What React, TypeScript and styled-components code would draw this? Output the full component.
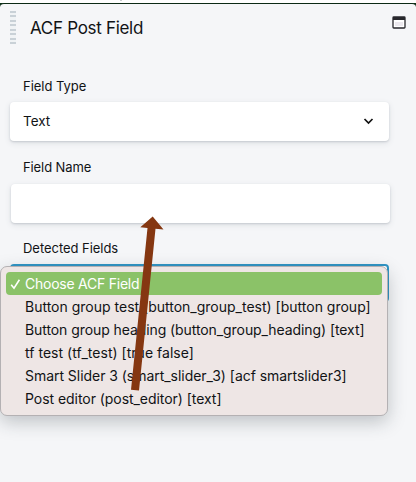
import React from "react";
import styled, { createGlobalStyle } from "styled-components";

const GlobalStyle = createGlobalStyle`
  * { box-sizing: border-box; }
  html, body { margin: 0; height: 100%; overflow: hidden; background: #fff; }
  body { font-family: Inter, "Liberation Sans", sans-serif; color: #111315; }
`;

const Page = styled.div`
  position: relative;
  width: 416px;
  height: 482px;
  padding-top: 3px;
  background: linear-gradient(#fff 3px, #0c3217 3px, #0c3217 8px, #f5f6f8 8px);
`;

const PageTick = styled.span`
  position: absolute;
  left: 120px;
  top: 0;
  width: 2px;
  height: 1px;
  background: #c9cccf;
`;

const Panel = styled.main`
  height: 479px;
  border-top: 1px solid #0c2a15;
  border-radius: 4px 4px 0 0;
  background: #f5f6f8;
`;

const Header = styled.header`
  display: flex;
  align-items: flex-start;
  height: 71px;
  padding: 7px 10px 0;
`;

const Grip = styled.div`
  width: 6px;
  height: 33px;
  background: repeating-linear-gradient(#c9d1d7 0 2px, #f0f3f5 2px 4.43px);
`;

const Title = styled.h1`
  flex: 1;
  margin: 5px 0 0 14px;
  font-size: 17px;
  line-height: 24px;
  font-weight: 400;
  letter-spacing: -0.3px;
`;

const WindowIcon = styled.svg`
  width: 14px;
  height: 13px;
  margin: 4.5px 0 0;
`;

const Field = styled.section<{ $shift?: number }>`
  width: 379px;
  height: 81px;
  margin-left: ${({ $shift = 0 }) => 10 + $shift}px;
  padding-top: 1px;
`;

const Label = styled.label<{ $shift?: number }>`
  display: block;
  height: ${({ $shift = 0 }) => 26 + $shift}px;
  padding-left: ${({ $shift = 0 }) => 13 - $shift}px;
  font-size: 13px;
  line-height: 20px;
  letter-spacing: ${({ $shift }) => ($shift ? -0.1 : -0.04)}px;
`;

const Control = styled.div<{ $focused?: boolean }>`
  display: flex;
  align-items: center;
  justify-content: space-between;
  height: ${({ $focused }) => ($focused ? 38 : 39)}px;
  padding: 0 15px 1px 13px;
  border-radius: 4px;
  background: #fff;
  font-size: 13.5px;
  box-shadow: ${({ $focused }) =>
    $focused ? "inset 0 0 0 2px #3195c5" : "0 1px 2px #c7cbd0, 0 2px 6px #dde0e4"};
`;

const Chevron = styled.svg`
  width: 11px;
  height: 8px;
`;

const Menu = styled.ul`
  position: absolute;
  left: 0;
  top: 266px;
  width: 388px;
  height: 150px;
  margin: 0;
  padding: 5px 5px 0;
  list-style: none;
  border: 1px solid #b4b1b3;
  border-radius: 7px;
  background: #eee6e5;
  box-shadow: 0 6px 18px rgba(35, 45, 55, 0.26);
`;

const Option = styled.li<{ $selected?: boolean; $tracking: number }>`
  display: flex;
  align-items: center;
  height: 23px;
  border-radius: 4px;
  background: ${({ $selected }) => ($selected ? "#8bc268" : "transparent")};
  color: ${({ $selected }) => ($selected ? "#fff" : "#111315")};
  font-size: 14px;
  letter-spacing: ${({ $tracking }) => $tracking}px;
  white-space: nowrap;
`;

const Mark = styled.span`
  display: flex;
  flex: 0 0 19px;
  padding-left: 4px;
`;

const Arrow = styled.svg`
  position: absolute;
  left: 130px;
  top: 214px;
  width: 36px;
  height: 180px;
  pointer-events: none;
`;

const options = [
  { label: "Choose ACF Field", tracking: -0.24 },
  { label: "Button group test (button_group_test) [button group]", tracking: 0 },
  { label: "Button group heading (button_group_heading) [text]", tracking: -0.08 },
  { label: "tf test (tf_test) [true false]", tracking: 0.02 },
  { label: "Smart Slider 3 (smart_slider_3) [acf smartslider3]", tracking: -0.04 },
  { label: "Post editor (post_editor) [text]", tracking: -0.05 },
];

export default function App() {
  return (
    <>
      <GlobalStyle />
      <Page>
        <PageTick />
        <Panel>
          <Header>
            <Grip />
            <Title>ACF Post Field</Title>
            <WindowIcon viewBox="0 0 14 13" aria-hidden="true">
              <rect x="1" y="1" width="12" height="11" rx="0.8" fill="#fff" stroke="#27272c" strokeWidth="1.3" />
              <path d="M1 1h12v3H1z" fill="#27272c" />
              <path d="M3 6h8v4H3z" fill="#ece9ef" />
            </WindowIcon>
          </Header>
          <Field>
            <Label>Field Type</Label>
            <Control>
              Text
              <Chevron viewBox="0 0 11 8" aria-hidden="true">
                <path d="m1.5 2 4 4 4-4" fill="none" stroke="#111" strokeWidth="1.7" />
              </Chevron>
            </Control>
          </Field>
          <Field $shift={1}>
            <Label $shift={1}>Field Name</Label>
            <Control />
          </Field>
          <Field>
            <Label>Detected Fields</Label>
            <Control $focused />
          </Field>
        </Panel>
        <Menu>
          {options.map((option, i) => (
            <Option key={option.label} $selected={i === 0} $tracking={option.tracking}>
              <Mark>
                {i === 0 && (
                  <svg width="11" height="12" viewBox="0 0 11 12" aria-hidden="true">
                    <path d="m1.2 6.8 2.8 3.4L9.4 1.8" fill="none" stroke="#fff" strokeWidth="1.6" />
                  </svg>
                )}
              </Mark>
              {option.label}
            </Option>
          ))}
        </Menu>
        <Arrow viewBox="0 0 36 180" aria-hidden="true">
          <path d="m22.7 2.5 10.8 13-8-.8L9 176.5l-8-.7L17.5 14l-7.2-.8z" fill="#853711" />
        </Arrow>
      </Page>
    </>
  );
}
